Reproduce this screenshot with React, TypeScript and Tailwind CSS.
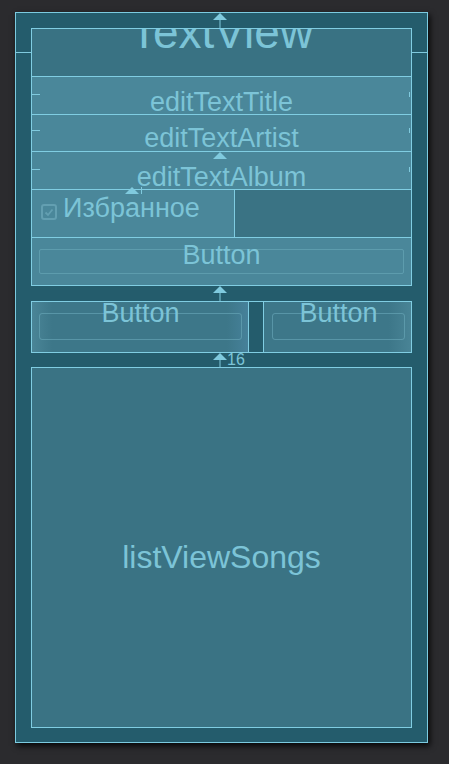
import React from "react";

function ArrowUp({ className, h }: { className: string; h: number }) {
  return (
    <svg className={className} width="14" height={h} viewBox={`0 0 14 ${h}`}>
      <polygon points="0,7 7,0 14,7" fill="#80cade" />
      <line x1="7" y1="7" x2="7" y2={h} stroke="#80cade" strokeWidth="1" />
    </svg>
  );
}

export default function App() {
  return (
    <div className="w-[449px] h-[764px] overflow-hidden bg-[#2b2b2e] pt-[12px] pl-[15px] font-['Liberation_Sans',Arial,sans-serif] text-[#7cc4d7]">
      <div className="relative box-border w-[413px] h-[731px] border border-[#7ccbe0] bg-[#245c6c] pt-[15px] px-[15px] shadow-[2px_3px_6px_rgba(0,0,0,0.85)]">
        <div className="flex flex-col">
          {/* TextView */}
          <div className="box-border h-[49px] overflow-hidden border border-[#80cde2] bg-[#397283] text-center">
            <div className="-mt-[20px] text-[46px] leading-[46px]">TextView</div>
          </div>

          {/* edit texts */}
          <div className="-mt-px box-border h-[39px] border border-[#80cde2] bg-[#4a879a] pt-[12px] text-center text-[27px] leading-[27px]">
            editTextTitle
          </div>
          <div className="-mt-px box-border h-[38px] border border-[#80cde2] bg-[#4a879a] pt-[10px] text-center text-[27px] leading-[27px]">
            editTextArtist
          </div>
          <div className="-mt-px box-border h-[39px] border border-[#80cde2] [border-bottom-style:dashed] bg-[#4a879a] pt-[12px] text-center text-[27px] leading-[27px]">
            editTextAlbum
          </div>

          {/* checkbox row */}
          <div className="-mt-px box-border flex h-[49px] border border-[#80cde2] bg-[#3a7384]">
            <div className="flex w-[203px] border-r border-[#80cde2] bg-[#4a879a] pl-[9px] pt-[5px]">
              <div className="mt-[9px] flex h-[16px] w-[16px] items-center justify-center rounded-[3px] border-2 border-[#639fb1]">
                <svg width="10" height="9" viewBox="0 0 10 9">
                  <path d="M1.5 4.5 L4 7 L8.5 1.5" stroke="#639fb1" strokeWidth="1.8" fill="none" />
                </svg>
              </div>
              <span className="ml-[6px] text-[27px] leading-[27px]">Избранное</span>
            </div>
          </div>

          {/* Button */}
          <div className="-mt-px box-border h-[49px] border border-[#80cde2] bg-[#4a879a] px-[7px] pt-[11px]">
            <div className="box-border h-[25px] rounded-[2px] border border-[#6aaabb]/60 text-center">
              <div className="-mt-[8px] text-[27px] leading-[27px]">Button</div>
            </div>
          </div>

          {/* two buttons */}
          <div className="mt-[15px] box-border flex h-[52px] border border-[#80cde2]">
            <div className="box-border w-[216px] bg-[linear-gradient(90deg,#4a8597_0px,#3d7789_20px,#3d7789_195px,#46819a_216px)] pl-[7px] pt-[11px]">
              <div className="box-border h-[27px] w-[203px] rounded-[3px] border border-[#6aaabb]/60 text-center">
                <div className="-mt-[14px] text-[27px] leading-[27px]">Button</div>
              </div>
            </div>
            <div className="box-border w-[16px] border-x border-[#80cde2] bg-[#245c6c]" />
            <div className="box-border flex-1 bg-[linear-gradient(90deg,#3d7789_0px,#3d7789_125px,#4a8597_149px)] pl-[8px] pt-[11px]">
              <div className="box-border h-[27px] w-[133px] rounded-[3px] border border-[#6aaabb]/60 text-center">
                <div className="-mt-[14px] text-[27px] leading-[27px]">Button</div>
              </div>
            </div>
          </div>

          {/* list view */}
          <div className="mt-[14px] box-border h-[361px] border border-[#80cde2] bg-[#3a7384] pt-[173px] text-center text-[32px] leading-[32px]">
            listViewSongs
          </div>
        </div>

        {/* constraint decorations */}
        <ArrowUp className="absolute left-[197px] top-0" h={15} />
        <div className="absolute left-0 top-[39px] h-px w-[15px] bg-[#80cade]" />
        <div className="absolute left-[396px] top-[39px] h-px w-[15px] bg-[#80cade]" />

        <div className="absolute left-[16px] top-[81px] h-px w-[8px] bg-[#80cade]" />
        <div className="absolute left-[16px] top-[117px] h-px w-[8px] bg-[#80cade]" />
        <div className="absolute left-[16px] top-[156px] h-px w-[8px] bg-[#80cade]" />
        <div className="absolute left-[393px] top-[79px] h-[5px] w-px bg-[#80cade]" />
        <div className="absolute left-[393px] top-[115px] h-[5px] w-px bg-[#80cade]" />
        <div className="absolute left-[393px] top-[154px] h-[5px] w-px bg-[#80cade]" />

        <ArrowUp className="absolute left-[197px] top-[139px]" h={7} />
        <ArrowUp className="absolute left-[109px] top-[174px]" h={7} />
        <div className="absolute left-[125px] top-[174px] h-[7px] w-px bg-[#80cade]" />

        <ArrowUp className="absolute left-[197px] top-[273px]" h={15} />
        <ArrowUp className="absolute left-[197px] top-[340px]" h={14} />
        <span className="absolute left-[211px] top-[339px] text-[16px] leading-[16px]">16</span>
      </div>
    </div>
  );
}
